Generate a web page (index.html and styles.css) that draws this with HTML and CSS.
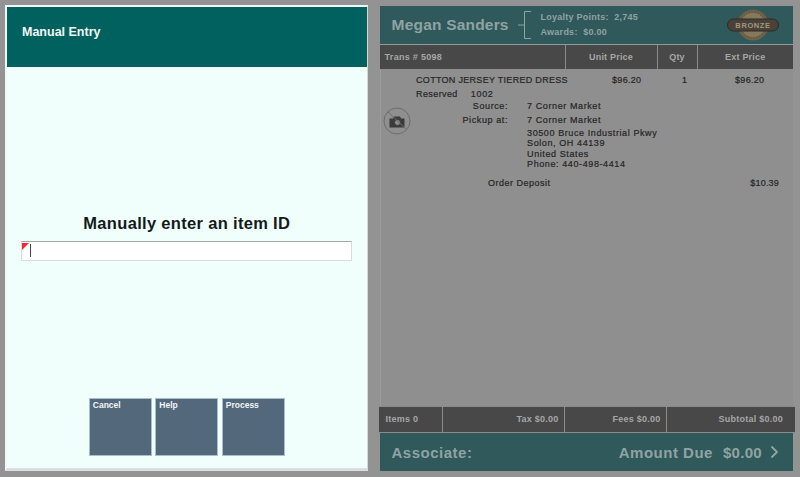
FILE: index.html
```html
<!DOCTYPE html>
<html lang="en">
<head>
<meta charset="utf-8">
<title>Manual Entry</title>
<link rel="stylesheet" href="styles.css">
</head>
<body>
<div class="screen">
  <section class="dialog">
    <header class="dialog-head">Manual Entry</header>
    <div class="dialog-body">
      <h1 class="prompt">Manually enter an item ID</h1>
      <div class="field"><span class="flag"></span><span class="caret"></span></div>
      <div class="buttons">
        <div class="btn">Cancel</div>
        <div class="btn">Help</div>
        <div class="btn">Process</div>
      </div>
    </div>
  </section>
  <section class="pos">
    <header class="cust">
      <div class="cust-name">Megan Sanders</div>
      <svg class="bracket" width="14" height="28" viewBox="0 0 14 28"><path d="M0 14H6.500M13 .5H6.500V27.500H13" fill="none" stroke="#8fa3a3" stroke-width="1"/></svg>
      <div class="loyalty">
        <div>Loyalty Points:&nbsp; 2,745</div>
        <div>Awards:&nbsp; $0.00</div>
      </div>
      <svg class="badge" width="52" height="32" viewBox="0 0 52 32">
        <circle cx="26" cy="16" r="15.500" fill="#6f6148"/>
        <circle cx="26" cy="16" r="12.500" fill="#85795c" stroke="#5b5140" stroke-dasharray="1.500 1.500"/>
        <rect x=".5" y="10" width="51" height="12" rx="6" fill="#4a4238" stroke="#2f2a24"/>
        <text x="26" y="19" text-anchor="middle" class="badge-text">BRONZE</text>
      </svg>
    </header>
    <div class="cols">
      <div class="col col-trans">Trans # 5098</div>
      <div class="col col-unit">Unit Price</div>
      <div class="col col-qty">Qty</div>
      <div class="col col-ext">Ext Price</div>
    </div>
    <div class="items">
      <div class="line line-title">
        <span class="title">COTTON JERSEY TIERED DRESS</span>
        <span class="price">$96.20</span>
        <span class="qty">1</span>
        <span class="ext">$96.20</span>
      </div>
      <div class="line reserved"><span>Reserved</span><span class="res-no">1002</span></div>
      <div class="line kv kv-first"><span class="k">Source:</span><span>7 Corner Market</span></div>
      <div class="line kv"><span class="k">Pickup at:</span><span>7 Corner Market</span></div>
      <div class="addr">
        <div>30500 Bruce Industrial Pkwy</div>
        <div>Solon, OH 44139</div>
        <div>United States</div>
        <div>Phone: 440-498-4414</div>
      </div>
      <div class="deposit"><span>Order Deposit</span><span class="deposit-amt">$10.39</span></div>
      <svg class="nophoto" width="28" height="28" viewBox="0 0 28 28">
        <circle cx="14" cy="14" r="13" fill="none" stroke="#6d6d6d" stroke-width="1"/>
        <path d="M6.500 11.500H10L11 9.500H17L18 11.500H21.500V20.500H6.500z" fill="#3b3b3b"/>
        <circle cx="14.500" cy="15.500" r="3" fill="#8d8d8d" stroke="#3b3b3b"/>
        <path d="M5 5L24 23" stroke="#6d6d6d" stroke-width="1"/>
      </svg>
    </div>
    <div class="totals">
      <div class="tot tot-items">Items 0</div>
      <div class="tot tot-tax">Tax $0.00</div>
      <div class="tot tot-fees">Fees $0.00</div>
      <div class="tot tot-sub">Subtotal $0.00</div>
    </div>
    <footer class="due">
      <div class="due-left">Associate:</div>
      <div class="due-right">
        <span class="due-label">Amount Due</span><span>$0.00</span>
        <svg class="due-arrow" width="9" height="14" viewBox="0 0 9 14"><path d="M1.500 1.500L7 7L1.500 12.500" fill="none" stroke="#93a5a5" stroke-width="1.800"/></svg>
      </div>
    </footer>
  </section>
</div>
</body>
</html>
```

FILE: styles.css
```css
* { box-sizing: border-box; }
html, body { margin: 0; padding: 0; }
body {
  width: 800px;
  height: 477px;
  overflow: hidden;
  background: #939393;
  font-family: "Liberation Sans", Arial, sans-serif;
}
.screen {
  display: flex;
  height: 477px;
  padding: 5px;
  gap: 11px;
}
.dialog {
  width: 363px;
  height: 466px;
  display: flex;
  flex-direction: column;
  border: 2px solid #f4f6f5;
  border-right: 1px solid #d6d8d7;
  border-bottom: 3px solid #dcdedd;
  background: #f0fffb;
}
.dialog-head {
  height: 60px;
  background: #00615e;
  color: #f2f8f6;
  font-size: 12.500px;
  font-weight: bold;
  padding: 17px 0 0 15px;
  line-height: 16px;
}
.dialog-body {
  flex: 1;
  display: flex;
  flex-direction: column;
  align-items: center;
  padding-top: 146px;
}
.prompt {
  margin: 0;
  font-size: 16.500px;
  line-height: 20px;
  font-weight: bold;
  color: #141a1a;
  letter-spacing: .32px;
}
.field {
  position: relative;
  width: 331px;
  height: 20px;
  margin-top: 8px;
  margin-left: -1px;
  background: #fff;
  border: 1px solid #d8dcdb;
  border-top-color: #a3a8a7;
}
.flag {
  position: absolute;
  left: 0;
  top: 1px;
  width: 0;
  height: 0;
  border-top: 7px solid #f8263a;
  border-right: 7px solid transparent;
}
.caret {
  position: absolute;
  left: 8px;
  top: 2px;
  width: 1px;
  height: 13px;
  background: #444;
}
.buttons {
  display: flex;
  gap: 3.500px;
  margin-top: 137px;
}
.btn {
  width: 63px;
  height: 58px;
  background: #54687c;
  border: 1px solid #a8c0c8;
  color: #f2f5f5;
  font-size: 8.500px;
  font-weight: bold;
  padding: 0 0 0 3px;
  line-height: 12px;
}
.pos {
  width: 417px;
  height: 466px;
  display: flex;
  flex-direction: column;
  padding-top: 1px;
}
.cust {
  margin: 0 2px 0 1px;
  height: 39px;
  flex: none;
  display: flex;
  align-items: center;
  background: #2f595b;
  color: #8fa3a3;
  border-bottom: 1px solid #8c9c9c;
  padding-left: 12px;
}
.cust-name {
  font-size: 15.500px;
  font-weight: bold;
  width: 126px;
  letter-spacing: .2px;
}
.loyalty {
  margin-left: 9px;
  font-size: 9px;
  font-weight: bold;
  line-height: 15px;
  letter-spacing: .25px;
  width: 186px;
}
.badge-text {
  font: bold 7.500px "Liberation Sans", sans-serif;
  letter-spacing: .6px;
  fill: #a09680;
}
.cols {
  margin: 0 2px 0 1px;
  display: flex;
  height: 24px;
  flex: none;
  background: #484848;
  color: #a6a6a6;
  font-size: 9px;
  font-weight: bold;
  line-height: 24px;
  letter-spacing: .2px;
}
.col { text-align: center; border-left: 1px solid #8b8b8b; }
.col-trans { width: 185px; border-left: 0; text-align: left; padding-left: 5px; letter-spacing: .3px; }
.col-unit { width: 92px; }
.col-qty { width: 40px; }
.col-ext { flex: 1; }
.items {
  position: relative;
  flex: 1;
  margin: 0 2px 0 1px;
  background: #8f8f8f;
  border-left: 1px solid #9b9b9b;
  color: #262626;
  font-size: 9px;
  letter-spacing: .6px;
  padding-top: 5px;
  -webkit-text-stroke: .2px #262626;
}
.line { display: flex; height: 13.500px; line-height: 13px; }
.line-title { letter-spacing: .3px; }
.title { margin-left: 35.500px; width: 196px; }
.price { width: 30px; }
.qty { margin-left: 40px; width: 30px; }
.ext { margin-left: 23px; }
.reserved { margin-left: 35.500px; letter-spacing: .4px; }
.res-no { margin-left: 13px; letter-spacing: .7px; }
.kv-first { margin-top: -1px; }
.k { width: 127.500px; text-align: right; margin-right: 19px; letter-spacing: .6px; }
.addr { margin-left: 146.500px; line-height: 10.300px; padding-top: 1px; }
.deposit {
  display: flex;
  justify-content: space-between;
  margin: 8px 14px 0 107.500px;
  line-height: 12px;
  letter-spacing: .5px;
}
.deposit-amt { letter-spacing: .2px; }
.nophoto { position: absolute; left: 2px; top: 38px; }
.totals {
  display: flex;
  flex: none;
  height: 27px;
  background: #484848;
  color: #a6a6a6;
  font-size: 9px;
  font-weight: bold;
  line-height: 25px;
  letter-spacing: .25px;
  border: 1px solid #8b8b8b;
  border-width: 1px 0;
}
.tot { text-align: right; padding-right: 5px; border-left: 1px solid #8b8b8b; }
.tot-items { width: 63px; border-left: 0; text-align: left; padding-left: 7px; }
.tot-tax { width: 122px; }
.tot-fees { width: 102px; }
.tot-sub { flex: 1; padding-right: 12px; }
.due {
  margin: 0 2px 0 1px;
  height: 38px;
  flex: none;
  display: flex;
  justify-content: space-between;
  align-items: center;
  background: #2f595b;
  color: #8fa3a3;
  font-size: 15px;
  font-weight: bold;
  letter-spacing: .3px;
  padding: 0 14px 0 12px;
}
.due-left { letter-spacing: .5px; }
.due-right { display: flex; align-items: center; gap: 10px; }
.due-label { letter-spacing: .5px; }
.due-arrow { margin-left: -2px; }
```
